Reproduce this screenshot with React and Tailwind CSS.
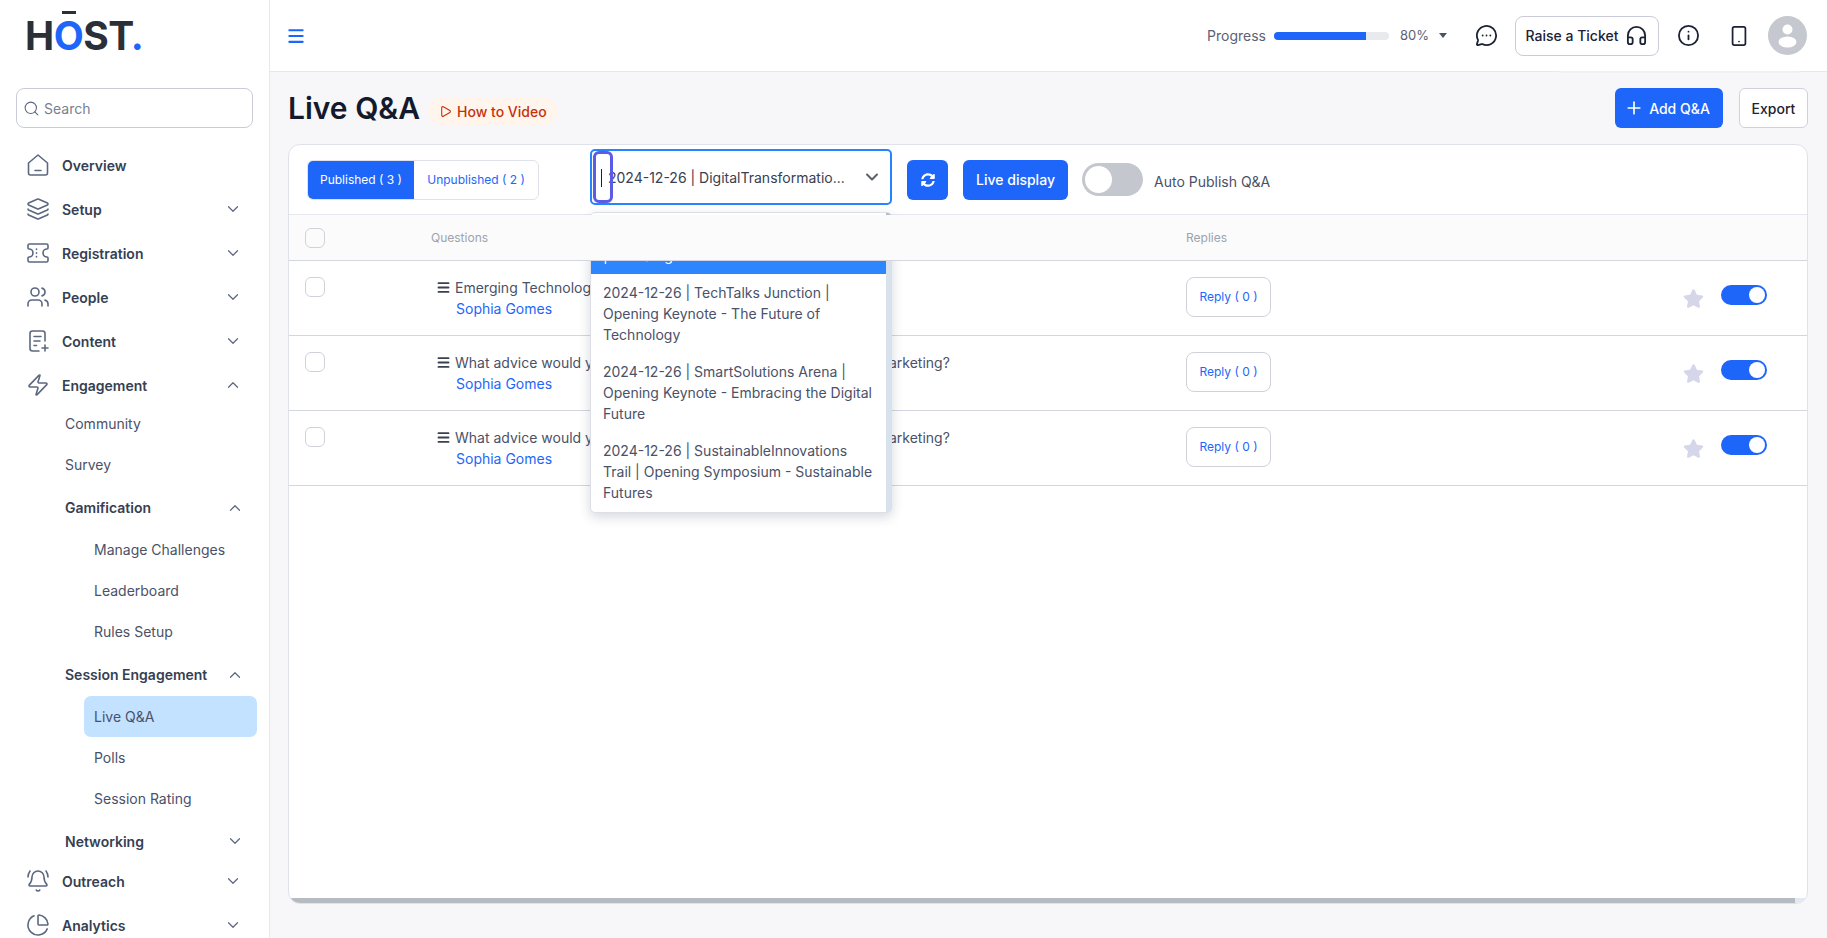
import {
  ChartPie,
  ChevronDown,
  ChevronUp,
  Headphones,
  Info,
  Layers,
  BellRing,
  Menu,
  MessageCircleMore,
  Play,
  Plus,
  Search,
  Smartphone,
  Users,
  Zap,
} from "lucide-react";
import { FaStar, FaSyncAlt } from "react-icons/fa";

function HomeIcon() {
  return (
    <svg width="24" height="24" viewBox="0 0 24 24" fill="none" stroke="currentColor" strokeWidth="1.6" strokeLinejoin="round" strokeLinecap="round">
      <path d="M2.500 10 12 2l9.500 8v10a2 2 0 0 1-2 2h-15a2 2 0 0 1-2-2z" />
      <path d="M9 17.500h6" />
    </svg>
  );
}

function TicketIcon() {
  return (
    <svg width="24" height="24" viewBox="0 0 24 24" fill="none" stroke="currentColor" strokeWidth="1.6" strokeLinejoin="round" strokeLinecap="round">
      <path d="M2 4.500A1.500 1.500 0 0 1 3.500 3h17A1.500 1.500 0 0 1 22 4.500V7a1 1 0 0 1-1 1 4 4 0 0 0 0 8 1 1 0 0 1 1 1v2.500a1.500 1.500 0 0 1-1.500 1.500h-17A1.500 1.500 0 0 1 2 19.500V17a1 1 0 0 1 1-1 4 4 0 0 0 0-8 1 1 0 0 1-1-1z" />
      <path d="M10.500 8v.5M10.500 11.800v.5M10.500 15.500v.5" />
    </svg>
  );
}

function ContentIcon() {
  return (
    <svg width="24" height="24" viewBox="0 0 24 24" fill="none" stroke="currentColor" strokeWidth="1.6" strokeLinejoin="round" strokeLinecap="round">
      <path d="M19 12V4.500A2.500 2.500 0 0 0 16.500 2h-10A2.500 2.500 0 0 0 4 4.500v15A2.500 2.500 0 0 0 6.500 22H13" />
      <path d="M8 7.500h7M8 12h6M8 16.500h2.500M19 16v6M16 19h6" />
    </svg>
  );
}

function Avatar() {
  return (
    <div className="flex h-[39px] w-[39px] items-center justify-center rounded-full bg-[#c5c8ce]">
      <svg width="39" height="39" viewBox="0 0 39 39" fill="#ffffff">
        <circle cx="19.500" cy="13.500" r="5" />
        <ellipse cx="19.500" cy="26" rx="9" ry="5.500" />
      </svg>
    </div>
  );
}

function TopItem({ icon, label, open }) {
  return (
    <div className="flex h-[44px] shrink-0 items-center pl-[26px] pr-[27px] text-[14px] font-semibold text-[#354052]">
      <span className="flex w-[36px] shrink-0 text-[#5c6880]">{icon}</span>
      <span className="flex-1">{label}</span>
      {open === true && <ChevronUp size={18} strokeWidth={1.6} className="text-[#5c6880]" />}
      {open === false && <ChevronDown size={18} strokeWidth={1.6} className="text-[#5c6880]" />}
    </div>
  );
}

function SubItem({ label }) {
  return <div className="flex h-[41px] items-center pl-[65px] text-[14px] text-[#4a5168]">{label}</div>;
}

function SubHead({ label, open, height }) {
  return (
    <div className={`flex items-center pl-[65px] pr-[25px] text-[14px] font-semibold text-[#354052] ${height}`}>
      <span className="flex-1">{label}</span>
      {open ? (
        <ChevronUp size={18} strokeWidth={1.6} className="text-[#5c6880]" />
      ) : (
        <ChevronDown size={18} strokeWidth={1.6} className="text-[#5c6880]" />
      )}
    </div>
  );
}

function LeafItem({ label, active }) {
  return (
    <div
      className={`ml-[84px] mr-[12px] flex h-[41px] items-center rounded-[7px] pl-[10px] text-[14px] text-[#4a5168] ${
        active ? "bg-[#c2e2ff]" : ""
      }`}
    >
      {label}
    </div>
  );
}

function Sidebar() {
  return (
    <aside className="flex h-full w-[270px] shrink-0 flex-col overflow-hidden border-r border-[#e6e8ee] bg-white">
      <div className="h-[88px] shrink-0 pl-[25px] pt-[13px]">
        <div className="text-[39px] font-bold leading-[46px] tracking-[-0.5px] text-[#2b2f38]">
          H
          <span className="relative text-[#1d66f9]">
            O<span className="absolute left-[8px] top-[-1px] h-[3px] w-[14px] bg-[#2b2f38]" />
          </span>
          ST<span className="-ml-[3px] text-[#1d66f9]">.</span>
        </div>
      </div>
      <div className="mx-[16px] flex h-[40px] shrink-0 items-center gap-[4px] rounded-[8px] border border-[#c9ccd8] pl-[6px]">
        <Search size={17} strokeWidth={1.5} className="text-[#5c6880]" />
        <span className="text-[14px] text-[#7a8090]">Search</span>
      </div>
      <nav className="mt-[15px] shrink-0">
        <TopItem icon={<HomeIcon />} label="Overview" />
        <TopItem icon={<Layers size={24} strokeWidth={1.6} />} label="Setup" open={false} />
        <TopItem icon={<TicketIcon />} label="Registration" open={false} />
        <TopItem icon={<Users size={24} strokeWidth={1.6} />} label="People" open={false} />
        <TopItem icon={<ContentIcon />} label="Content" open={false} />
        <TopItem icon={<Zap size={24} strokeWidth={1.6} />} label="Engagement" open={true} />
        <div className="-mb-[4px] -mt-[4px]">
          <SubItem label="Community" />
          <SubItem label="Survey" />
          <SubHead label="Gamification" open height="mt-[1px] h-[43px]" />
          <LeafItem label="Manage Challenges" />
          <LeafItem label="Leaderboard" />
          <LeafItem label="Rules Setup" />
          <SubHead label="Session Engagement" open height="mt-[1px] h-[43px]" />
          <LeafItem label="Live Q&A" active />
          <LeafItem label="Polls" />
          <LeafItem label="Session Rating" />
          <SubHead label="Networking" height="h-[44px]" />
        </div>
        <TopItem icon={<BellRing size={24} strokeWidth={1.6} />} label="Outreach" open={false} />
        <TopItem icon={<ChartPie size={24} strokeWidth={1.6} />} label="Analytics" open={false} />
      </nav>
    </aside>
  );
}

function Topbar() {
  return (
    <header className="relative flex h-[72px] shrink-0 items-center border-b border-[#e6e8ee] bg-white pl-[16px] pr-[20px]">
      <Menu size={20} strokeWidth={2.5} className="text-[#1d66f9]" />
      <div className="ml-auto flex items-center">
        <span className="text-[14px] text-[#5b6175]">Progress</span>
        <div className="ml-[8px] h-[8px] w-[115px] overflow-hidden rounded-full bg-[#e8eaee]">
          <div className="h-full w-[80%] bg-[#1d66f9]" />
        </div>
        <span className="ml-[11px] text-[13px] text-[#5b6175]">80%</span>
        <span className="ml-[10px] h-0 w-0 border-x-[4px] border-t-[5px] border-x-transparent border-t-[#4a5168]" />
        <MessageCircleMore size={23} strokeWidth={1.9} className="ml-[28px] text-[#1b2233]" />
        <div className="ml-[17px] flex h-[40px] w-[144px] items-center justify-center gap-[7px] rounded-[8px] border border-[#c9ccd8] text-[14px] font-medium text-[#1b2233]">
          Raise a Ticket
          <Headphones size={23} strokeWidth={1.9} />
        </div>
        <Info size={23} strokeWidth={1.9} className="ml-[18px] text-[#1b2233]" />
        <Smartphone size={22} strokeWidth={1.9} className="ml-[28px] text-[#1b2233]" />
        <div className="ml-[18px]">
          <Avatar />
        </div>
      </div>
      <div className="absolute bottom-[-2px] left-[1289px] h-[2px] w-[240px] bg-[#eef0f4]" />
    </header>
  );
}

function Row({ title, text }) {
  return (
    <div className="flex h-[75px] shrink-0 border-b border-[#d3d6df]">
      <div className="ml-[16px] mt-[16px] h-[20px] w-[20px] rounded-[6px] border border-[#cfd2da]" />
      <div className="ml-[111px] w-[750px] pt-[16px]">
        <div className="flex h-[21px] items-center text-[14px] text-[#4a5168]">
          <Menu size={15} strokeWidth={3} className="mr-[4px] text-[#3a4050]" />
          {title}
        </div>
        <div className="pl-[20px] text-[14px] leading-[21px] text-[#1d66f9]">{text}</div>
      </div>
      <div className="mt-[16px] flex h-[40px] w-[85px] items-center justify-center rounded-[8px] border border-[#cfd2da] text-[12px] text-[#1d66f9]">
        Reply ( 0 )
      </div>
      <div className="ml-auto mr-[40px] mt-[24px] flex items-start">
        <FaStar size={21} className="mt-[3px] text-[#d5d6ea]" />
        <div className="ml-[17px] flex h-[20px] w-[46px] items-center justify-end rounded-full bg-[#1d66f9] pr-[2px]">
          <div className="h-[16px] w-[16px] rounded-full bg-white" />
        </div>
      </div>
    </div>
  );
}

function SelectBox() {
  return (
    <div className="relative ml-[51px] mt-[4px] flex h-[56px] w-[302px] shrink-0 items-center rounded-[5px] border-2 border-[#2684ff] pl-[16px] pr-[8px] text-[14px] text-[#3a4050]">
      <span className="flex-1">2024-12-26 | DigitalTransformatio...</span>
      <ChevronDown size={20} strokeWidth={2.4} className="text-[#5b5f66]" />
      <div className="absolute left-[1px] top-0 h-[52px] w-[20px] rounded-[6px] border-[3px] border-[#5a5be6]">
        <div className="ml-[5px] mt-[15px] h-[18px] w-px bg-[#1b2233]" />
      </div>
    </div>
  );
}

function Dropdown() {
  return (
    <div className="absolute left-[301px] top-[67px] z-10 flex h-[301px] w-[302px] overflow-hidden rounded-[5px] border border-[#dcdfe6] bg-white shadow-[0_4px_12px_rgba(30,40,70,0.18)]">
      <div className="flex flex-1 flex-col justify-end pb-[1px] text-[14px] leading-[21px] text-[#4a5168]">
        <div className="bg-[#2e86fe] px-[12px] py-[8px] text-white">
          2024-12-26 | DigitalTransformation
          <br />| Hub Stage
        </div>
        <div className="px-[12px] py-[8px]">
          2024-12-26 | TechTalks Junction |
          <br />
          Opening Keynote - The Future of
          <br />
          Technology
        </div>
        <div className="px-[12px] py-[8px]">
          2024-12-26 | SmartSolutions Arena |
          <br />
          Opening Keynote - Embracing the Digital
          <br />
          Future
        </div>
        <div className="px-[12px] py-[8px]">
          2024-12-26 | SustainableInnovations
          <br />
          Trail | Opening Symposium - Sustainable
          <br />
          Futures
        </div>
      </div>
      <div className="w-[5px] shrink-0 bg-[#d8e2ec]">
        <div className="h-[4px] bg-[#b5bbc1]" />
      </div>
    </div>
  );
}

function Card() {
  return (
    <section className="relative mb-[34px] ml-[18px] mr-[19px] flex flex-1 flex-col overflow-hidden rounded-[12px] border border-[#dfe2ea] bg-white">
      <div className="flex h-[70px] shrink-0 items-start border-b border-[#e6e8ee]">
        <div className="ml-[18px] mt-[15px] flex h-[40px] w-[232px] shrink-0 overflow-hidden rounded-[6px] border border-[#dfe2ea] text-[12px]">
          <div className="flex w-[106px] items-center justify-center bg-[#1d66f9] text-white">Published ( 3 )</div>
          <div className="flex flex-1 items-center justify-center text-[#1d66f9]">Unpublished ( 2 )</div>
        </div>
        <SelectBox />
        <div className="ml-[15px] mt-[15px] flex h-[40px] w-[41px] items-center justify-center rounded-[6px] bg-[#1d66f9] text-white">
          <FaSyncAlt size={14} />
        </div>
        <div className="ml-[15px] mt-[15px] flex h-[40px] w-[105px] items-center justify-center rounded-[6px] bg-[#1d66f9] pb-[2px] text-[14px] font-medium text-white">
          Live display
        </div>
        <div className="ml-[14px] mt-[18px] flex h-[33px] w-[61px] items-center rounded-full bg-[#c4c7ce] pl-[3px]">
          <div className="h-[27px] w-[27px] rounded-full bg-white" />
        </div>
        <span className="ml-[11px] mt-[26px] text-[14px] text-[#4a5168]">Auto Publish Q&A</span>
      </div>
      <div className="relative z-20 flex h-[46px] shrink-0 items-center border-b border-[#d3d6df] bg-[#fbfbfb] text-[12px] text-[#9ca3af]">
        <div className="ml-[16px] h-[20px] w-[20px] rounded-[6px] border border-[#cfd2da]" />
        <span className="ml-[106px] w-[755px]">Questions</span>
        <span>Replies</span>
      </div>
      <Dropdown />
      <Row title="Emerging Technologies in Event Management" text="Sophia Gomes" />
      <Row title="What advice would you give to someone starting their career in marketing?" text="Sophia Gomes" />
      <Row title="What advice would you give to someone starting their career in marketing?" text="Sophia Gomes" />
      <div className="flex-1" />
      <div className="flex h-[5px] shrink-0">
        <div className="flex-1 bg-[#b5bbc1]" />
        <div className="w-[12px] bg-[#e3e9f2]" />
      </div>
    </section>
  );
}

export default function App() {
  return (
    <div className="flex h-screen overflow-hidden bg-[#f7f7fa] font-['Inter',sans-serif]">
      <Sidebar />
      <main className="flex min-w-0 flex-1 flex-col">
        <Topbar />
        <div className="flex h-[72px] shrink-0 items-center pl-[18px] pr-[19px]">
          <h1 className="text-[30px] font-semibold text-[#141a2b]">Live Q&A</h1>
          <div className="ml-[8px] mt-[6px] flex h-[28px] items-center gap-[5px] rounded-full bg-[#fff5ed] px-[11px] text-[14px] font-medium text-[#c4320a]">
            <Play size={13} strokeWidth={2} />
            How to Video
          </div>
          <div className="ml-auto flex h-[40px] w-[108px] items-center justify-center gap-[5px] rounded-[6px] bg-[#1d66f9] pr-[4px] text-[14px] font-medium text-white">
            <Plus size={20} strokeWidth={2} />
            Add Q&A
          </div>
          <div className="ml-[16px] flex h-[40px] w-[69px] items-center justify-center rounded-[6px] border border-[#cfd2da] bg-white text-[14px] font-medium text-[#1b2233]">
            Export
          </div>
        </div>
        <Card />
      </main>
    </div>
  );
}
